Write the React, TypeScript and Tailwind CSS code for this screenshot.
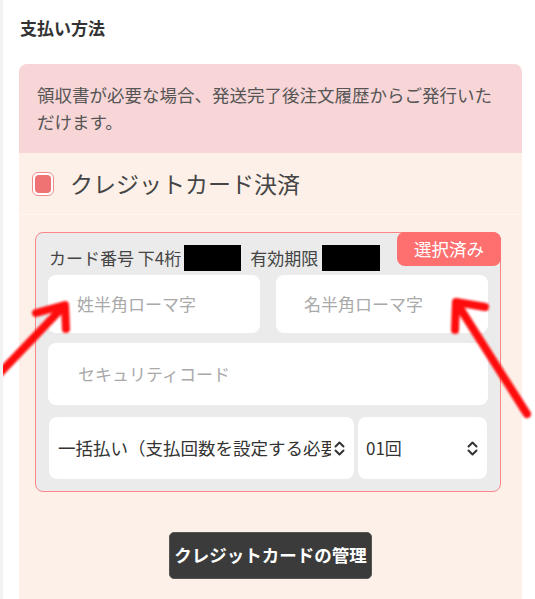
import { ReactNode } from 'react';

const font = { fontFamily: '"Noto Sans CJK JP", "Noto Sans", sans-serif' };

function UpDown() {
  return (
    <svg width="11" height="15" viewBox="0 0 11 15" fill="none" stroke="#333" strokeWidth="2" strokeLinecap="round" strokeLinejoin="round">
      <path d="M1.5 5.5 5.5 1.5 9.5 5.5" />
      <path d="M1.5 9.5 5.5 13.5 9.5 9.5" />
    </svg>
  );
}

function Field({ children, className = '' }: { children: ReactNode; className?: string }) {
  return (
    <div className={`flex items-center bg-white rounded-lg text-[17px] text-[#a9a9a9] ${className}`}>
      {children}
    </div>
  );
}

function Arrows() {
  return (
    <svg className="absolute inset-0 pointer-events-none" width="535" height="599" viewBox="0 0 535 599">
      <defs>
        <filter id="soft">
          <feGaussianBlur stdDeviation="0.9" />
        </filter>
      </defs>
      <g stroke="#ff0a0a" strokeWidth="8" strokeLinecap="round" strokeLinejoin="round" fill="none" filter="url(#soft)">
        <path d="M-4 374 L58 309" />
        <path d="M33 313 L62 305 L63 329" />
        <path d="M524 414 L455 305" />
        <path d="M482 307 L453 302 L452 330" />
      </g>
    </svg>
  );
}

export default function App() {
  return (
    <div className="relative min-h-[599px] bg-white border-l-[3px] border-[#f2f2f2] overflow-hidden" style={font}>
      <div className="pt-4 pl-[17px] text-[17px] leading-[24px] font-bold text-[#333]">支払い方法</div>

      <div className="ml-[16px] mt-[24px] w-[503px]">
        {/* notice */}
        <div className="rounded-t-lg bg-[#f8d6d7] pl-[18px] pr-[14px] pt-[17px] pb-[18px] text-[17.5px] leading-[27px] text-[#555]">
          領収書が必要な場合、発送完了後注文履歴からご発行いただけます。
        </div>

        <div className="bg-[#fcf0e8] pb-[40px]">
          {/* payment option */}
          <div className="flex items-center h-[62px] pl-[13px] border-b border-[#fdf6f1]">
            <div className="w-[22px] h-[24px] rounded-[6px] border-[1.5px] border-[#f08c8c] bg-white p-[2px]">
              <div className="w-full h-full rounded-[4px] bg-[#ef7373]" />
            </div>
            <span className="ml-[16px] text-[23px] leading-none text-[#454545]">クレジットカード決済</span>
          </div>

          {/* card */}
          <div className="relative ml-[16px] mt-[17px] w-[466px] rounded-lg border border-[#ff8585] bg-[#ebebeb] pt-[12px] pb-[12px]">
            <div className="absolute -top-px -right-px w-[104px] h-[34px] rounded-lg bg-[#fe6f6f] flex items-center justify-center text-[17.5px] text-white">
              選択済み
            </div>

            <div className="flex items-center h-[26px] pl-[13px] text-[17px] text-[#444]">
              <span>カード番号 下4桁</span>
              <span className="ml-[3px] w-[57px] h-[26px] bg-black" />
              <span className="ml-[9px]">有効期限</span>
              <span className="ml-[4px] w-[58px] h-[26px] bg-black" />
            </div>

            <div className="px-[12px] mt-[4px] grid grid-cols-2 gap-4">
              <Field className="h-[58px] pl-[29px]">姓半角ローマ字</Field>
              <Field className="h-[58px] pl-[28px]">名半角ローマ字</Field>
            </div>

            <div className="px-[12px] mt-[10px]">
              <Field className="h-[62px] pl-[30px]">セキュリティコード</Field>
            </div>

            <div className="pl-[13px] pr-[13px] mt-[12px] flex gap-[4px]">
              <div className="w-[305px] h-[62px] bg-white rounded-lg flex items-center pl-[9px] pr-[9px] text-[17.5px] text-[#333]">
                <div className="flex-1 overflow-hidden whitespace-nowrap">一括払い（支払回数を設定する必要があります）</div>
                <div className="ml-[3px]"><UpDown /></div>
              </div>
              <div className="flex-1 h-[62px] bg-white rounded-lg flex items-center pl-[8px] pr-[9px] text-[17px] text-[#333]">
                <div className="flex-1">01回</div>
                <UpDown />
              </div>
            </div>
          </div>

          <div className="flex justify-center mt-[40px]">
            <button className="h-[47px] px-[4px] rounded-[5px] bg-[#3b3b3b] border border-[#555] text-white font-bold text-[17.5px]">
              クレジットカードの管理
            </button>
          </div>
        </div>
      </div>

      <Arrows />
    </div>
  );
}
